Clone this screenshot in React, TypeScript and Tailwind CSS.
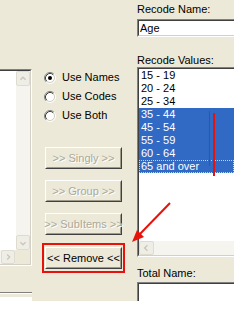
import React from "react";

function Radio({ checked }: { checked?: boolean }) {
  return (
    <svg width="12" height="12" viewBox="0 0 12 12" className="shrink-0">
      <circle cx="6" cy="6" r="4" fill="#ffffff" />
      <path d="M2.11 9.89 A5.5 5.5 0 0 1 9.89 2.11" fill="none" stroke="#808080" strokeWidth="1" />
      <path d="M9.89 2.11 A5.5 5.5 0 0 1 2.11 9.89" fill="none" stroke="#ffffff" strokeWidth="1" />
      <path d="M2.82 9.18 A4.5 4.5 0 0 1 9.18 2.82" fill="none" stroke="#404040" strokeWidth="1" />
      <path d="M9.18 2.82 A4.5 4.5 0 0 1 2.82 9.18" fill="none" stroke="#d4d0c8" strokeWidth="1" />
      {checked && <circle cx="6" cy="6" r="2" fill="#000000" />}
    </svg>
  );
}

function ScrollBtn({ dir, className }: { dir: "up" | "down" | "left" | "right"; className: string }) {
  const pts =
    dir === "up"
      ? "4,8 7,5 10,8"
      : dir === "down"
      ? "4,6 7,9 10,6"
      : dir === "left"
      ? "8,4 5,7 8,10"
      : "6,4 9,7 6,10";
  return (
    <div className={"flex items-center justify-center bg-[#efeee6] border border-[#dfdccf] rounded-[2px] " + className}>
      <svg width="14" height="14" viewBox="0 0 14 14">
        <polyline points={pts} fill="none" stroke="#cbc8b9" strokeWidth="1.6" />
      </svg>
    </div>
  );
}

function DisabledButton({ label }: { label: string }) {
  return (
    <div className="w-[77px] h-[22px] border border-t-white border-l-white border-r-[#404040] border-b-[#404040] bg-[#ece9d8]">
      <div className="w-full h-full border border-t-[#ece9d8] border-l-[#ece9d8] border-r-[#9d9a8c] border-b-[#9d9a8c] flex items-center justify-center text-[#aca899] [text-shadow:1px_1px_0_#ffffff] whitespace-nowrap">
        {label}
      </div>
    </div>
  );
}

const rows = [
  { t: "15 - 19", s: false },
  { t: "20 - 24", s: false },
  { t: "25 - 34", s: false },
  { t: "35 - 44", s: true },
  { t: "45 - 54", s: true },
  { t: "55 - 59", s: true },
  { t: "60 - 64", s: true },
  { t: "65 and over", s: true, f: true },
];

export default function App() {
  return (
    <div className="relative w-[234px] h-[320px] bg-white overflow-hidden text-[11px] leading-[13px] text-black [font-family:'Liberation_Sans',Arial,sans-serif]">
      <div className="flex h-[301px] bg-[#ece9d8] overflow-hidden">
        {/* Left column */}
        <div className="w-[32px] shrink-0 flex flex-col pt-[69px]">
          <div className="h-[197px] flex flex-col border-t border-t-[#808080] border-r border-r-white border-b border-b-white">
            <div className="flex-1 flex flex-col border-t border-t-[#404040] border-r border-r-[#d4d0c8] border-b border-b-[#d4d0c8]">
              <div className="flex-1 flex">
                <div className="flex-1 bg-white" />
                <div className="w-[15px] flex flex-col bg-[#f5f4ef] border-l border-l-white">
                  <ScrollBtn dir="up" className="h-[15px] w-[14px]" />
                  <div className="flex-1" />
                  <ScrollBtn dir="down" className="h-[15px] w-[14px]" />
                </div>
              </div>
              <div className="h-[14px] flex">
                <div className="flex-1 flex justify-end bg-[#f5f4ef]">
                  <ScrollBtn dir="right" className="h-[14px] w-[14px]" />
                </div>
                <div className="w-[15px] bg-[#ece9d8]" />
              </div>
            </div>
          </div>
          <div className="mt-[26px] h-[2px] border-t border-t-[#808080] border-b border-b-white" />
          <div className="h-[3px]" />
          <div className="flex-1 bg-white" />
        </div>

        {/* Middle column */}
        <div className="w-[105px] shrink-0 flex flex-col pt-[68px]">
          <div className="flex flex-col pl-[12px]">
            <div className="h-[19px] flex items-center gap-[6px]">
              <Radio checked />
              <span>Use Names</span>
            </div>
            <div className="h-[19px] flex items-center gap-[6px]">
              <Radio />
              <span>Use Codes</span>
            </div>
            <div className="h-[19px] flex items-center gap-[6px]">
              <Radio />
              <span>Use Both</span>
            </div>
          </div>
          <div className="flex flex-col pl-[13px]">
            <div className="mt-[22px]">
              <DisabledButton label=">> Singly >>" />
            </div>
            <div className="mt-[11px]">
              <DisabledButton label=">> Group >>" />
            </div>
            <div className="mt-[11px]">
              <DisabledButton label=">> SubItems >>" />
            </div>
            <div className="mt-[8px] ml-[-3px] w-[83px] border-2 border-[#e8120c] px-[1px] py-[2px]">
              <div className="w-[77px] h-[22px] border border-t-white border-l-white border-r-[#404040] border-b-[#404040] bg-[#ece9d8]">
                <div className="w-full h-full border border-t-[#ece9d8] border-l-[#ece9d8] border-r-[#9d9a8c] border-b-[#9d9a8c] flex items-center justify-center whitespace-nowrap">
                  {"<< Remove <<"}
                </div>
              </div>
            </div>
          </div>
        </div>

        {/* Right column */}
        <div className="flex-1 flex flex-col min-w-0">
          <div className="mt-[3px] h-[13px] whitespace-nowrap">Recode Name:</div>
          <div className="mt-[3px] h-[19px] border-t border-l border-t-[#808080] border-l-[#808080] border-b border-b-white">
            <div className="h-full border-t border-l border-t-[#404040] border-l-[#404040] border-b border-b-[#d4d0c8] bg-white pl-[1px] flex items-center">
              Age
            </div>
          </div>
          <div className="mt-[17px] h-[13px] whitespace-nowrap">Recode Values:</div>
          <div className="h-[199px] flex flex-col border-t border-l border-t-[#808080] border-l-[#808080] border-b border-b-white">
            <div className="flex-1 flex flex-col border-t border-l border-t-[#404040] border-l-[#404040] border-b border-b-[#d4d0c8] bg-white">
              <div className="flex-1 flex flex-col">
                {rows.map((r) => (
                  <div
                    key={r.t}
                    className={
                      r.s
                        ? r.f
                          ? "h-[13px] bg-[#316ac5] text-white pl-[1px] border border-dotted border-[#d8d4b0] leading-[11px] whitespace-nowrap"
                          : "h-[13px] bg-[#316ac5] text-white pl-[2px] whitespace-nowrap"
                        : "h-[13px] pl-[2px] whitespace-nowrap"
                    }
                  >
                    {r.t}
                  </div>
                ))}
              </div>
              <div className="h-[14px] flex bg-[#f5f4ef]">
                <ScrollBtn dir="left" className="h-[14px] w-[15px]" />
                <div className="flex-1" />
              </div>
            </div>
          </div>
          <div className="mt-[10px] h-[13px] whitespace-nowrap">Total Name:</div>
          <div className="mt-[2px] h-[19px] shrink-0 border-t border-l border-t-[#808080] border-l-[#808080]">
            <div className="h-full border-t border-l border-t-[#404040] border-l-[#404040] bg-white" />
          </div>
        </div>
      </div>

      {/* annotation overlays */}
      <div className="absolute left-[209px] top-[111px] w-[1px] h-[55px] bg-[#2a58a8]" />
      <div className="absolute left-[213px] top-[113px] w-[2px] h-[63px] bg-[#e8120c]" />
      <svg className="absolute left-0 top-0 pointer-events-none" width="234" height="320" viewBox="0 0 234 320">
        <line x1="170" y1="203" x2="139" y2="235" stroke="#e8120c" strokeWidth="2" />
        <polygon points="132,242 144,237 137,230" fill="#e8120c" />
      </svg>
    </div>
  );
}
